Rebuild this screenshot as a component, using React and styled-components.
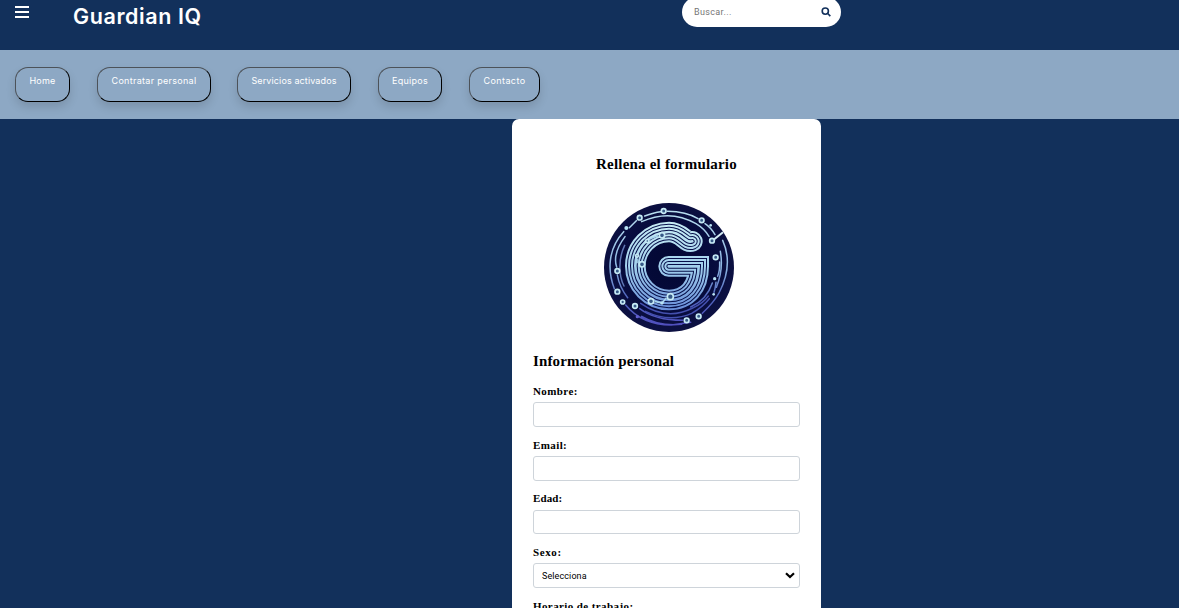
import React from 'react';
import styled, { createGlobalStyle } from 'styled-components';

const GlobalStyle = createGlobalStyle`
  * { box-sizing: border-box; }
  body { margin: 0; background: #12305b; overflow: hidden; }
`;

const Page = styled.div`
  height: 608px;
  overflow: hidden;
  background: #12305b;
  font-family: Inter, 'Liberation Sans', sans-serif;
`;

const Header = styled.header`
  height: 50px;
  display: flex;
  align-items: flex-start;
`;

const MenuButton = styled.button`
  width: 14px;
  height: 12px;
  margin: 6px 0 0 15px;
  padding: 0;
  border: 0;
  background: none;
  display: flex;
  flex-direction: column;
  justify-content: space-between;
`;

const MenuLine = styled.span`
  height: 2px;
  background: #fff;
`;

const Brand = styled.h1`
  margin: 0 0 0 44px;
  width: 609px;
  font-size: 21.5px;
  line-height: 32px;
  font-weight: 600;
  letter-spacing: 0.6px;
  color: #fff;
`;

const Search = styled.div`
  width: 159px;
  height: 30px;
  margin-top: -3px;
  padding: 0 10px 0 12px;
  display: flex;
  align-items: center;
  justify-content: space-between;
  border-radius: 15px;
  background: #fff;
`;

const SearchInput = styled.input`
  width: 100px;
  padding: 0;
  border: 0;
  background: none;
  font: 9px Roboto, sans-serif;
  letter-spacing: 0.35px;
  &::placeholder { color: #757575; opacity: 1; }
`;

const Nav = styled.nav`
  height: 69px;
  padding: 17px 15px;
  display: flex;
  background: #8da8c4;
`;

const NavButton = styled.button`
  width: ${(p) => p.$width}px;
  height: 35px;
  margin: 0 ${(p) => p.$gap}px 0 0;
  padding: 0 0 9px;
  flex: none;
  border: 1px solid;
  border-color: #4c5259 #000 #000 #4c5259;
  border-radius: 13px;
  background: transparent;
  box-shadow: 0 5px 10px rgba(0, 0, 0, 0.13);
  color: #fff;
  font: 9px Inter, sans-serif;
  letter-spacing: ${(p) => p.$spacing}px;
  white-space: nowrap;
`;

const FormCard = styled.form`
  width: 309px;
  height: 560px;
  margin-left: 512px;
  padding: 36px 21px 0;
  border-radius: 7px;
  background: #fff;
  color: #000;
  font-family: 'Liberation Serif', serif;
`;

const Title = styled.h2`
  margin: 0;
  font-size: 15px;
  line-height: 18px;
  letter-spacing: ${(p) => (p.$align ? 0.2 : 0.12)}px;
  text-align: ${(p) => p.$align || 'left'};
`;

const LogoWrap = styled.div`
  height: 149px;
  padding: 0 0 0 71px;
  margin: 30px 0 0;
  svg { display: block; }
`;

const Field = styled.div`
  height: 53.7px;
`;

const Fields = styled.div`
  padding-top: 13px;
`;

const Label = styled.label`
  display: block;
  height: 19.4px;
  font-size: 11px;
  font-weight: 700;
  line-height: 16px;
  letter-spacing: ${(p) => p.$spacing || 0.4}px;
`;

const Control = styled.div`
  height: 24.5px;
  padding: 0 4px 0 8px;
  display: flex;
  align-items: center;
  justify-content: space-between;
  border: 1px solid #ced4da;
  border-radius: 3px;
  font: 9px Roboto, sans-serif;
  letter-spacing: 0.1px;
`;

const navItems = [
  ['Home', 55, 27, 0.2],
  ['Contratar personal', 114, 26, 0.3],
  ['Servicios activados', 114, 27, 0.12],
  ['Equipos', 64, 27, 0.25],
  ['Contacto', 71, 0, 0.4],
];

const SearchIcon = () => (
  <svg width="10" height="10" viewBox="0 0 10 10" fill="none" stroke="#12305b" strokeWidth="1.6">
    <circle cx="4.3" cy="4.1" r="3.1" />
    <path d="M6.5 6.3L9.3 9.1" />
  </svg>
);

const Chevron = () => (
  <svg width="10" height="7" viewBox="0 0 10 7" fill="none" stroke="#000" strokeWidth="2.2">
    <path d="M1 1.2L5 5L9 1.2" />
  </svg>
);

const gPath =
  'M307 154C285 162 278 126 237 126A102 102 0 0 0 136 228A102 102 0 0 0 237 330C292 330 326 290 326 229L236 229';

const bands = [
  [62, 'url(#shine)'],
  [50, '#07104a'],
  [44, 'url(#shine)'],
  [32, '#07104a'],
  [26, 'url(#shine)'],
  [14, '#07104a'],
  [8, 'url(#shine)'],
];

const nodes = [
  [149, 83, 7], [221, 63, 7], [335, 91, 7], [366, 152, 7], [377, 202, 7],
  [82, 243, 7], [82, 305, 7], [98, 336, 6], [135, 348, 7], [290, 391, 7],
  [326, 379, 7], [183, 334, 8], [241, 320, 9], [156, 223, 8], [216, 136, 8],
  [172, 153, 5], [141, 197, 4],
];

const dots = [[109, 114, 6], [362, 106, 4], [374, 266, 5], [371, 313, 4], [142, 380, 5], [216, 339, 5]];

const Logo = () => (
  <svg width="130" height="129" viewBox="42 39 390 387" fill="none">
    <defs>
      <radialGradient id="disc" cx="50%" cy="48%" r="52%">
        <stop offset="0" stopColor="#030833" />
        <stop offset="0.65" stopColor="#060b3d" />
        <stop offset="1" stopColor="#0d1142" />
      </radialGradient>
      <linearGradient id="shine" gradientUnits="userSpaceOnUse" x1="0" y1="95" x2="0" y2="365">
        <stop offset="0" stopColor="#c9edf5" />
        <stop offset="0.5" stopColor="#a2d0ed" />
        <stop offset="1" stopColor="#668bd8" />
      </linearGradient>
      <linearGradient id="ring" gradientUnits="userSpaceOnUse" x1="0" y1="60" x2="0" y2="405">
        <stop offset="0" stopColor="#b9dff0" />
        <stop offset="0.5" stopColor="#8eb6e3" />
        <stop offset="0.75" stopColor="#5066bd" />
        <stop offset="1" stopColor="#504fbd" />
      </linearGradient>
    </defs>
    <ellipse cx="237" cy="232.5" rx="195" ry="193.5" fill="url(#disc)" />
    <g stroke="url(#ring)" strokeWidth="4.5" strokeLinecap="round">
      <path d="M164 78Q192 67 212 65M232 64Q289 65 324 86M101 125C52 178 53 244 73 296" />
      <path d="M118 113L139 92M345 101Q362 112 375 134M398 151Q431 224 387 309Q373 335 337 370" />
      <path d="M155 95Q240 56 318 101Q343 116 357 139M105 140C75 180 73 210 80 231M82 255Q88 291 113 323" />
      <path d="M391 184Q401 240 379 292M367 279Q350 330 302 351" />
      <path d="M149 356Q195 391 278 391M107 345Q155 404 244 405L302 397M155 379Q208 410 275 403" />
      <path d="M152 340Q230 394 308 354Q338 341 355 318M166 364Q239 399 305 370Q338 351 358 326" stroke="#4450ae" />
      <path d="M389 216Q390 241 383 259M378 277Q376 294 372 307" />
      <path d="M104 166C84 207 86 258 102 288" stroke="#6078b5" />
    </g>
    {bands.map(([width, color]) => (
      <path key={width} d={gPath} stroke={color} strokeWidth={width} strokeLinecap="round" strokeLinejoin="miter" />
    ))}
    <path d="M371 149L399 127" stroke="#d5eef5" strokeWidth="6" />
    <path d="M165 154Q186 143 204 137M141 207L141 220M194 334L216 339L229 324" stroke="#a9d5ee" strokeWidth="5" />
    {nodes.map(([x, y, r]) => (
      <circle key={`${x}-${y}`} cx={x} cy={y} r={r} fill="#365987" stroke="#c6eaf5" strokeWidth="5" />
    ))}
    {dots.map(([x, y, r]) => (
      <circle key={`${x}-${y}`} cx={x} cy={y} r={r} fill={y > 360 ? '#625fd0' : '#b9e2f4'} />
    ))}
  </svg>
);

export default function App() {
  return (
    <Page>
      <GlobalStyle />
      <Header>
        <MenuButton type="button" aria-label="Menú">
          <MenuLine /><MenuLine /><MenuLine />
        </MenuButton>
        <Brand>Guardian IQ</Brand>
        <Search>
          <SearchInput placeholder="Buscar..." />
          <SearchIcon />
        </Search>
      </Header>
      <Nav>
        {navItems.map(([label, width, gap, spacing]) => (
          <NavButton key={label} type="button" $width={width} $gap={gap} $spacing={spacing}>{label}</NavButton>
        ))}
      </Nav>
      <FormCard>
        <Title $align="center">Rellena el formulario</Title>
        <LogoWrap><Logo /></LogoWrap>
        <Title>Información personal</Title>
        <Fields>
          <Field><Label>Nombre:</Label><Control /></Field>
          <Field><Label>Email:</Label><Control /></Field>
          <Field><Label $spacing={0.1}>Edad:</Label><Control /></Field>
          <Field><Label $spacing={0.6}>Sexo:</Label><Control>Selecciona<Chevron /></Control></Field>
          <Field><Label>Horario de trabajo:</Label><Control /></Field>
        </Fields>
      </FormCard>
    </Page>
  );
}
